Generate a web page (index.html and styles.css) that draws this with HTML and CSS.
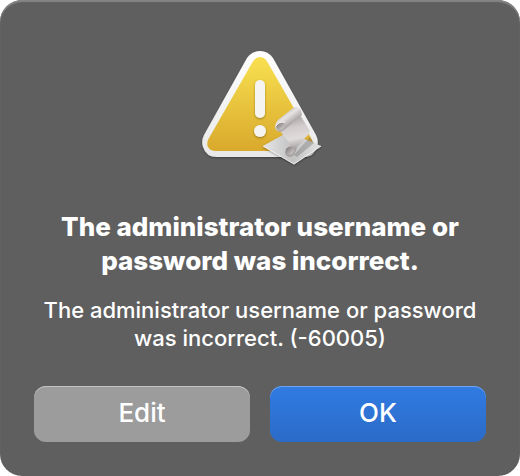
FILE: index.html
```html
<!DOCTYPE html>
<html lang="en">
<head>
    <meta charset="UTF-8">
    <meta name="viewport" content="width=device-width, initial-scale=1.0">
    <title>Incorrect password</title>
    <link rel="stylesheet" href="styles.css">
</head>
<body>

<div class="dialog" role="alertdialog" aria-labelledby="title" aria-describedby="message">
    <svg class="icon" viewBox="0 0 128 128" aria-hidden="true">
        <defs>
            <linearGradient id="rim" x1="0" y1="0" x2="0" y2="1">
                <stop offset="0" stop-color="#ffffff"/>
                <stop offset="1" stop-color="#e8e8e8"/>
            </linearGradient>
            <linearGradient id="yellow" x1="0" y1="0" x2="0" y2="1">
                <stop offset="0" stop-color="#f8e050"/>
                <stop offset="1" stop-color="#d9a92c"/>
            </linearGradient>
            <linearGradient id="paper" x1="0" y1="0" x2="1" y2="0">
                <stop offset="0" stop-color="#e6e6e6"/>
                <stop offset="0.5" stop-color="#c2c2c2"/>
                <stop offset="1" stop-color="#e2e2e2"/>
            </linearGradient>
            <linearGradient id="sheet" gradientUnits="userSpaceOnUse" x1="96" y1="76" x2="102" y2="108">
                <stop offset="0" stop-color="#a8a2a2"/>
                <stop offset="0.35" stop-color="#d2cccc"/>
                <stop offset="0.7" stop-color="#e0dcdc"/>
                <stop offset="1" stop-color="#a8a2a2"/>
            </linearGradient>
            <linearGradient id="roll" gradientUnits="userSpaceOnUse" x1="89" y1="72" x2="97" y2="83">
                <stop offset="0" stop-color="#c9c3c3"/>
                <stop offset="0.35" stop-color="#e8e4e4"/>
                <stop offset="1" stop-color="#a8a2a2"/>
            </linearGradient>
            <linearGradient id="curl" x1="0" y1="0" x2="1" y2="1">
                <stop offset="0" stop-color="#787272"/>
                <stop offset="1" stop-color="#dcd7d7"/>
            </linearGradient>
            <filter id="shadow" x="-10%" y="-10%" width="120%" height="125%">
                <feDropShadow dx="0" dy="1" stdDeviation="1" flood-color="#000" flood-opacity="0.35"/>
            </filter>
        </defs>

        <!-- warning triangle -->
        <path filter="url(#shadow)" fill="url(#rim)" d="M51 18Q56 11 64 11T77 18L120 95Q123 101 121 107Q118 117 107 117H21Q10 117 7 107Q5 101 8 95Z"/>
        <path fill="url(#yellow)" d="M56 23Q59 17 64 17T72 23L115 98Q118 103 116 107Q114 111 108 111H20Q14 111 12 107Q10 103 13 98Z"/>
        <g filter="url(#shadow)" fill="#f6f4f1">
            <rect x="59" y="40" width="10" height="38" rx="5"/>
            <circle cx="64" cy="91" r="6"/>
        </g>

        <!-- script scroll -->
        <g filter="url(#shadow)">
            <path fill="url(#paper)" d="M67 106L92 92L125 106L98 124Z"/>
            <path fill="none" stroke="#f0f0f0" d="M67 106L98 124L125 106"/>
        </g>
        <path fill="#555" opacity="0.3" d="M98 115L114 97L118 103L101 117Z"/>
        <path fill="url(#sheet)" d="M84 91L90 85L104 75L114 91Q113 95 109 98L101 107Q99 117 93 117Q87 115 90 109Q92 106 95 105Z"/>
        <path fill="url(#roll)" d="M79 87Q79 83 82 80L97 68Q103 66 105 70L106 75L88 90Q85 93 81 91Q79 89 79 87Z"/>
        <path fill="url(#curl)" d="M80 86Q83 82 88 83Q90 86 87 89Q84 91 81 89Z"/>
        <path fill="none" stroke="#f4f0f0" d="M80 86Q83 81 89 82"/>
        <path fill="url(#curl)" d="M90 109Q93 106 97 107Q100 110 96 114Q92 116 90 113Z"/>
    </svg>
    <h1 class="title" id="title">The administrator username or password was incorrect.</h1>
    <p class="message" id="message">The administrator username or password was incorrect. (-60005)</p>
    <div class="buttons">
        <button class="button" type="button">Edit</button>
        <button class="button primary" type="button">OK</button>
    </div>
</div>

</body>
</html>
```

FILE: styles.css
```css
* {
    box-sizing: border-box;
}
body {
    margin: 0;
    background-color: #fff;
    font-family: Inter, "Liberation Sans", sans-serif;
    color: #fff;
}
.dialog {
    display: flex;
    flex-direction: column;
    align-items: center;
    min-height: 100vh;
    padding: 40px 34px 34px;
    border-radius: 22px;
    background-color: #5f5f5f;
    box-shadow: inset 0 2px 1px #858585;
    text-align: center;
}
.icon {
    width: 128px;
    height: 128px;
}
.title {
    max-width: 430px;
    margin: 42px 0 0;
    font-size: 26px;
    font-weight: 800;
    line-height: 34px;
}
.message {
    max-width: 450px;
    margin: 18px 0 0;
    font-size: 22px;
    font-weight: 500;
    line-height: 28px;
}
.buttons {
    display: grid;
    grid-template-columns: 1fr 1fr;
    gap: 20px;
    width: 100%;
    margin-top: auto;
}
.button {
    height: 56px;
    padding: 0 0 4px;
    border: none;
    border-radius: 12px;
    background-color: #9c9c9c;
    box-shadow: inset 0 1px 0 #c4c4c4;
    color: #fff;
    font-family: inherit;
    font-size: 26px;
    font-weight: 500;
}
.primary {
    background: linear-gradient(#317be2, #2b6bc8);
    box-shadow: inset 0 1px 0 #6ea4ee;
}
```
